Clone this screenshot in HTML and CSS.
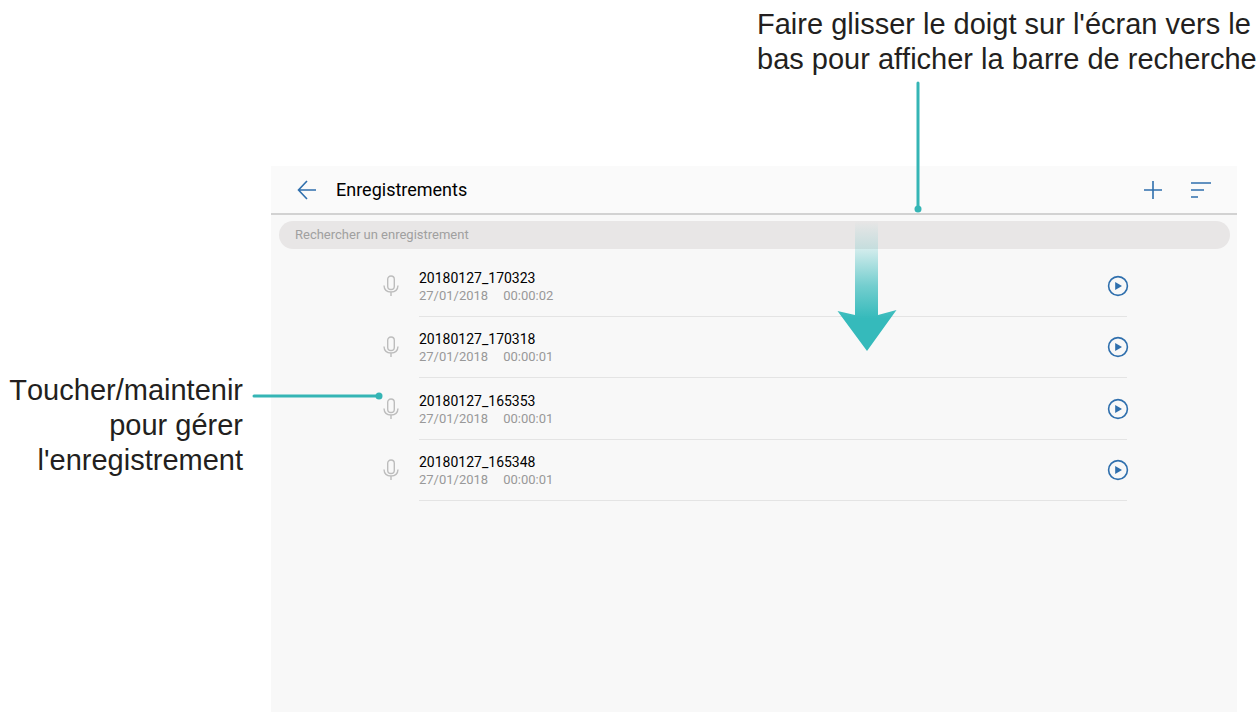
FILE: index.html
```html
<!DOCTYPE html>
<html lang="fr">
<head>
<meta charset="utf-8">
<title>Enregistrements</title>
<link rel="stylesheet" href="styles.css">
</head>
<body>
<svg class="defs" aria-hidden="true">
  <symbol id="mic" viewBox="0 0 16 22">
    <rect x="4.7" y="1" width="6.6" height="13.5" rx="3.3"/>
    <path d="M1 10.5C1.2 14.6 4 17 8 17s6.8-2.400 7-6.500M8 17v4"/>
  </symbol>
  <symbol id="play" viewBox="0 0 22 22">
    <circle cx="11" cy="11" r="9.400"/>
    <path class="solid" d="M8.200 7l6.800 4-6.800 4z"/>
  </symbol>
</svg>
<main class="guide">
  <p class="note note-top">Faire glisser le doigt sur l'écran vers le<br>bas pour afficher la barre de recherche</p>
  <p class="note note-side">Toucher/maintenir<br>pour gérer<br>l'enregistrement</p>
  <section class="app">
    <header class="bar">
      <button class="icon-button" type="button" aria-label="Retour">
        <svg width="20" height="20" viewBox="0 0 20 20"><path d="M19 10H1.500M10 1L1.500 10l8.500 9"/></svg>
      </button>
      <h1 class="title">Enregistrements</h1>
      <button class="icon-button" type="button" aria-label="Ajouter">
        <svg width="20" height="20" viewBox="0 0 20 20"><path d="M10 1v18M1 10h18"/></svg>
      </button>
      <button class="icon-button" type="button" aria-label="Trier">
        <svg width="22" height="20" viewBox="0 0 22 20"><path d="M1 3h20M1 10h13M1 17h7"/></svg>
      </button>
    </header>
    <input class="search" type="search" placeholder="Rechercher un enregistrement" aria-label="Rechercher un enregistrement">
    <ul class="list">
      <li class="row">
        <svg class="mic" width="16" height="22"><use href="#mic"/></svg>
        <div class="record">
          <div class="text"><span class="name">20180127_170323</span><span class="meta"><span>27/01/2018</span><span>00:00:02</span></span></div>
          <button class="icon-button" type="button" aria-label="Lire 20180127_170323"><svg width="22" height="22"><use href="#play"/></svg></button>
        </div>
      </li>
      <li class="row">
        <svg class="mic" width="16" height="22"><use href="#mic"/></svg>
        <div class="record">
          <div class="text"><span class="name">20180127_170318</span><span class="meta"><span>27/01/2018</span><span>00:00:01</span></span></div>
          <button class="icon-button" type="button" aria-label="Lire 20180127_170318"><svg width="22" height="22"><use href="#play"/></svg></button>
        </div>
      </li>
      <li class="row">
        <svg class="mic" width="16" height="22"><use href="#mic"/></svg>
        <div class="record">
          <div class="text"><span class="name">20180127_165353</span><span class="meta"><span>27/01/2018</span><span>00:00:01</span></span></div>
          <button class="icon-button" type="button" aria-label="Lire 20180127_165353"><svg width="22" height="22"><use href="#play"/></svg></button>
        </div>
      </li>
      <li class="row">
        <svg class="mic" width="16" height="22"><use href="#mic"/></svg>
        <div class="record">
          <div class="text"><span class="name">20180127_165348</span><span class="meta"><span>27/01/2018</span><span>00:00:01</span></span></div>
          <button class="icon-button" type="button" aria-label="Lire 20180127_165348"><svg width="22" height="22"><use href="#play"/></svg></button>
        </div>
      </li>
    </ul>
    <svg class="pointer pointer-top" width="8" height="132" viewBox="0 0 8 132" aria-hidden="true">
      <path d="M4 2v126"/><circle cx="4" cy="128" r="3.500"/>
    </svg>
    <svg class="pointer pointer-side" width="132" height="8" viewBox="0 0 132 8" aria-hidden="true">
      <path d="M3 4h125"/><circle cx="128" cy="4" r="3.500"/>
    </svg>
    <svg class="swipe" width="60" height="130" viewBox="0 0 60 130" aria-hidden="true">
      <defs>
        <linearGradient id="fade" x1="0" y1="0" x2="0" y2="1">
          <stop offset="0" stop-color="#35babb" stop-opacity="0"/>
          <stop offset=".22" stop-color="#35babb" stop-opacity=".2"/>
          <stop offset=".5" stop-color="#35babb" stop-opacity=".68"/>
          <stop offset=".75" stop-color="#35babb"/>
          <stop offset="1" stop-color="#35babb"/>
        </linearGradient>
      </defs>
      <path fill="url(#fade)" d="M18 0h23v94l18.500-5L30 130 .5 90 18 94z"/>
    </svg>
  </section>
</main>
</body>
</html>
```
FILE: styles.css
```css
* {
  box-sizing: border-box;
}

body {
  margin: 0;
  background: #fff;
  font-family: Roboto, "Liberation Sans", sans-serif;
  overflow: hidden;
}

.defs {
  position: absolute;
  width: 0;
  height: 0;
}

.guide {
  display: grid;
  grid-template-columns: 271px 1fr;
  grid-template-rows: auto 1fr;
  min-height: 100vh;
}

.note {
  margin: 0;
  color: #231f20;
  font: 29px/35px "Liberation Sans", Arial, sans-serif;
  font-kerning: none;
  white-space: nowrap;
}

.note-top {
  grid-column: 2;
  justify-self: end;
  width: 500px;
  padding: 7px 0 89px;
}

.note-side {
  padding: 207px 28px 0 0;
  text-align: right;
}

.app {
  position: relative;
  margin-right: 20px;
  background: #f8f8f8;
}

.bar {
  display: flex;
  align-items: center;
  gap: 27px;
  height: 49px;
  padding: 1px 25px 0 26px;
  border-bottom: 2px solid #d2d2d2;
  background: #fafafa;
}

.title {
  flex: 1;
  margin: 0 0 0 -8px;
  color: #000;
  font-size: 18px;
  font-weight: 400;
  line-height: 24px;
}

.icon-button {
  display: flex;
  padding: 0;
  border: 0;
  background: none;
}

.icon-button svg {
  fill: none;
  stroke: #2f6fad;
  stroke-width: 1.6px;
}

.icon-button .solid,
.solid {
  fill: #2f6fad;
  stroke: none;
}

.search {
  display: block;
  width: calc(100% - 15px);
  height: 28px;
  margin: 6px 7px 6px 8px;
  padding: 0 16px;
  border: 0;
  border-radius: 14px;
  background: #e8e6e6;
  font: 13px/28px Roboto, sans-serif;
  appearance: none;
}

.search::placeholder {
  color: #a0a0a0;
  opacity: 1;
}

.list {
  display: grid;
  grid-template-rows: repeat(4, 1fr);
  min-height: 246px;
  margin: 0;
  padding: 0 110px 0 112px;
  list-style: none;
}

.row {
  display: flex;
  align-items: center;
  gap: 20px;
}

.mic {
  flex: none;
  fill: none;
  stroke: #bdbdbd;
  stroke-width: 1.4px;
}

.record {
  display: flex;
  flex: 1;
  align-items: center;
  justify-content: space-between;
  align-self: stretch;
  padding-top: 1px;
  border-bottom: 1px solid #e4e4e4;
}

.record .icon-button {
  margin-right: -2px;
}

.text {
  display: grid;
  padding-top: 2px;
}

.name {
  color: #000;
  font-size: 14px;
  line-height: 18px;
}

.meta {
  display: flex;
  gap: 15px;
  color: #999;
  font-size: 13px;
  line-height: 18px;
}

.pointer {
  position: absolute;
  fill: #35b5b5;
}

.pointer path {
  stroke: #35b5b5;
  stroke-width: 3px;
  stroke-linecap: round;
}

.pointer-top {
  top: -85px;
  right: 315px;
}

.pointer-side {
  top: 226px;
  left: -20px;
}

.swipe {
  position: absolute;
  top: 55px;
  right: 340px;
}
```
